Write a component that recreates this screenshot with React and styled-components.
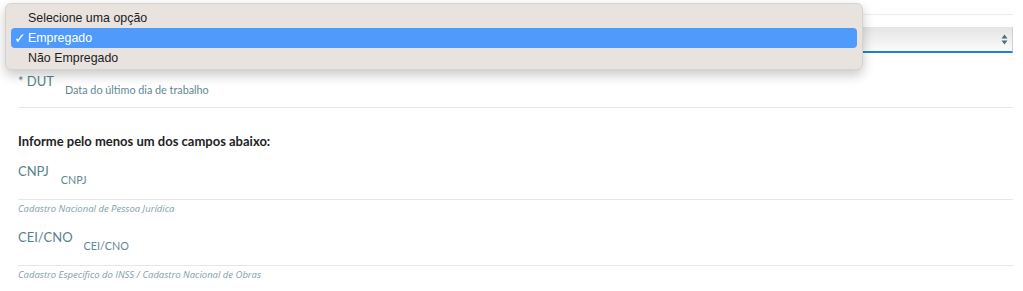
import React from 'react';
import styled, {createGlobalStyle} from 'styled-components';

const GlobalStyle = createGlobalStyle`
  body {
    margin: 0;
    background: #ffffff;
    font-family: Lato, "Open Sans", sans-serif;
  }
`;

const Page = styled.div`
  position: relative;
  width: 1023px;
  height: 291px;
  overflow: hidden;
  padding: 0 10px 0 18px;
  box-sizing: border-box;
`;

const TopRule = styled.div`
  height: 14px;
  border-bottom: 1px solid #ececec;
`;

const SelectBox = styled.div`
  margin-top: 12px;
  height: 24px;
  display: flex;
  align-items: center;
  justify-content: flex-end;
  padding-right: 4px;
  background: linear-gradient(#e4e4e4, #fbfbfb);
  border-right: 1px solid #cfcfcf;
  border-bottom: 2px solid #1f7fd6;
`;

const Arrows = styled.svg`
  width: 7px;
  height: 11px;
`;

const FieldRow = styled.div`
  display: flex;
  align-items: flex-start;
  height: ${({h}) => h}px;
  padding-top: ${({pt}) => pt}px;
  box-sizing: border-box;
  border-bottom: 1px solid #e6e6e6;
`;

const Label = styled.span`
  font-size: 13px;
  line-height: 13px;
  color: #55838d;
`;

const Placeholder = styled.span`
  font-size: 10.8px;
  line-height: 11px;
  color: #5f8893;
  margin-top: 9px;
  margin-left: ${({ml}) => ml}px;
`;

const Heading = styled.h3`
  margin: 25px 0 0;
  font-size: 13px;
  line-height: 16px;
  font-weight: 700;
  color: #1e1e1e;
`;

const Help = styled.div`
  font-family: "Open Sans", sans-serif;
  font-style: italic;
  font-size: 9.5px;
  line-height: 12px;
  color: #7fa0a7;
  margin-top: 3px;
`;

const Menu = styled.div`
  position: absolute;
  top: 3px;
  left: 5px;
  width: 858px;
  height: 67px;
  box-sizing: border-box;
  padding: 4px 5px 3px;
  background: #e9e3e0;
  border: 1px solid #d6d2ce;
  border-radius: 6px;
  box-shadow: 0 5px 12px rgba(0, 0, 0, 0.22);
  font-family: "Liberation Sans", Arial, sans-serif;
`;

const Option = styled.div`
  position: relative;
  height: 20px;
  display: flex;
  align-items: center;
  padding-left: 17px;
  border-radius: 4px;
  font-size: 12.4px;
  color: ${({selected}) => (selected ? '#ffffff' : '#1c1c1c')};
  background: ${({selected}) => (selected ? '#4f9bfb' : 'transparent')};
`;

const Check = styled.span`
  position: absolute;
  left: 3px;
  top: 2px;
  font-size: 14px;
  line-height: 16px;
`;

const App = () => (
    <Page>
        <GlobalStyle/>
        <TopRule/>
        <SelectBox>
            <Arrows viewBox="0 0 7 11">
                <path d="M3.5 0.5 L6.5 4.5 L0.5 4.5 Z" fill="#4d6f7c"/>
                <path d="M3.5 10.5 L6.5 6.5 L0.5 6.5 Z" fill="#4d6f7c"/>
            </Arrows>
        </SelectBox>
        <FieldRow h={55} pt={22}>
            <Label>* DUT</Label>
            <Placeholder ml={11}>Data do último dia de trabalho</Placeholder>
        </FieldRow>
        <Heading>Informe pelo menos um dos campos abaixo:</Heading>
        <FieldRow h={51} pt={16}>
            <Label>CNPJ</Label>
            <Placeholder ml={12}>CNPJ</Placeholder>
        </FieldRow>
        <Help>Cadastro Nacional de Pessoa Jurídica</Help>
        <FieldRow h={51} pt={16}>
            <Label>CEI/CNO</Label>
            <Placeholder ml={11}>CEI/CNO</Placeholder>
        </FieldRow>
        <Help>Cadastro Específico do INSS / Cadastro Nacional de Obras</Help>

        <Menu>
            <Option>Selecione uma opção</Option>
            <Option selected><Check>✓</Check>Empregado</Option>
            <Option>Não Empregado</Option>
        </Menu>
    </Page>
);

export default App;
